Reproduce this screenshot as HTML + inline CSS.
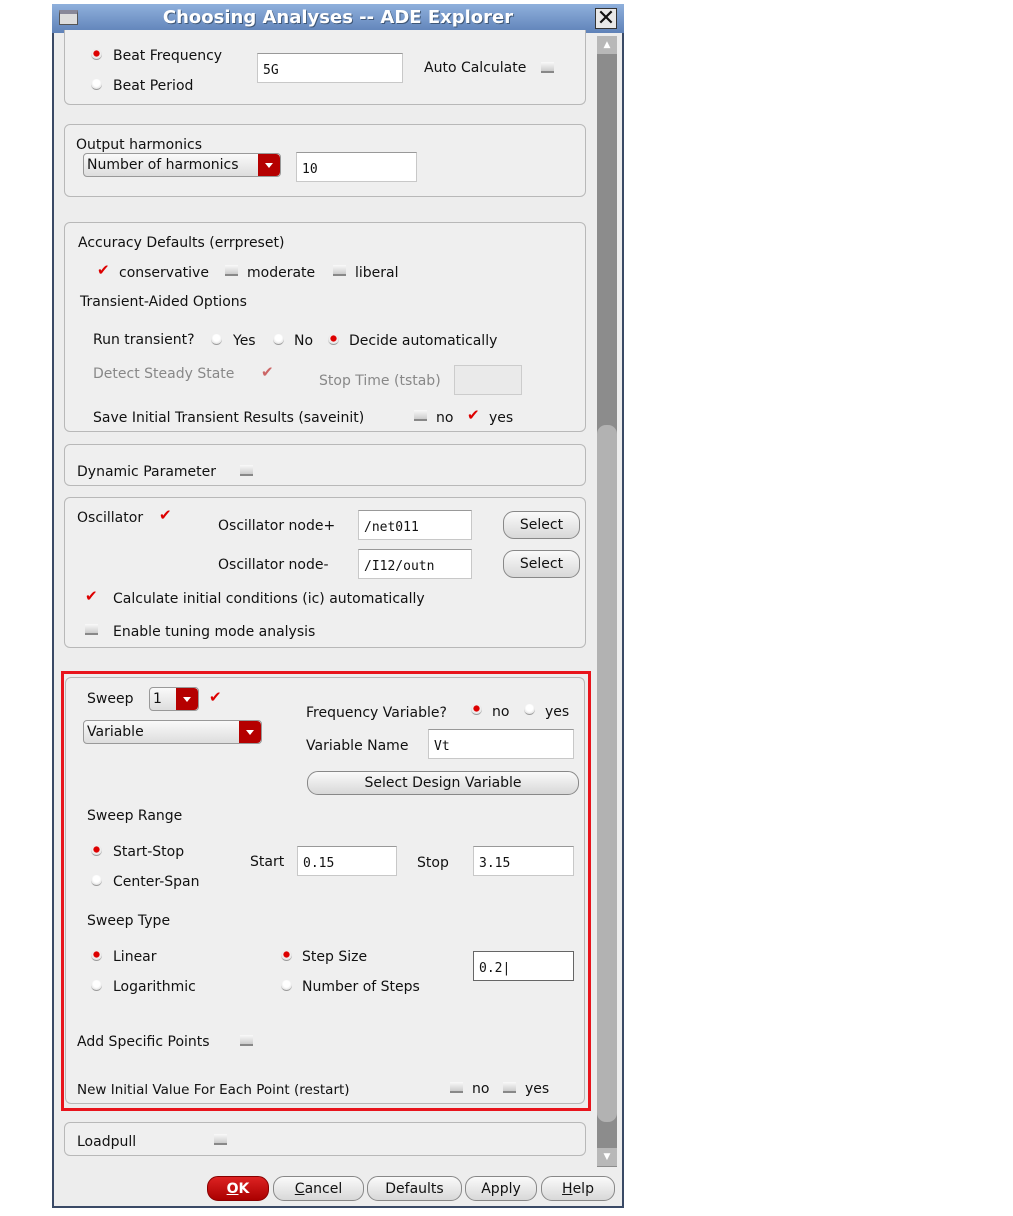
<!DOCTYPE html>
<html><head><meta charset="utf-8"><style>
*{box-sizing:border-box;margin:0;padding:0}
body{width:1013px;height:1216px;background:#fff;position:relative;font-family:"DejaVu Sans","Liberation Sans",sans-serif;font-size:14px;color:#111;overflow:hidden}
.a{position:absolute;white-space:nowrap;line-height:20px}
.win{position:absolute;left:52px;top:4px;width:572px;height:1204px;background:#ededed;border:2px solid #3a4a66}
.title{position:absolute;left:52px;top:4px;width:572px;height:29px;background:linear-gradient(#8fb0dc,#5f82b8);color:#fff;font-weight:bold;font-size:18px;text-align:center;line-height:28px;text-shadow:1px 1px 0 #405878}
.grp{position:absolute;border:1px solid #b8b8b8;border-radius:6px;background:#efefef}
.tf{position:absolute;background:#fff;border:1px solid #c8c8c8;border-top-color:#999;font-family:"DejaVu Sans Mono","Liberation Mono",monospace;font-size:13px;padding:9px 0 0 5px}
.rd{position:absolute;width:11px;height:11px;border-radius:50%;background:radial-gradient(circle at 50% 40%,#fff 40%,#ccc 100%);border-bottom:1px solid #999}
.rd.on{background:radial-gradient(circle at 50% 45%,#d00 35%,#f4f4f4 45%,#ccc 100%)}
.cb{position:absolute;width:13px;height:11px;background:linear-gradient(#fafafa,#ccc);border-bottom:2px solid #888}
.ck{position:absolute;color:#d00;font-size:15px;font-weight:bold;line-height:12px}
.btn{position:absolute;border:1px solid #888;border-radius:11px;background:linear-gradient(#fafafa,#d8d8d8);text-align:center;font-size:14px;line-height:26px}
.dd{position:absolute;border:1px solid #999;border-radius:4px;background:linear-gradient(#fafafa,#ddd);font-size:14px;padding-left:3px;line-height:23px}
.dd i{position:absolute;right:0;top:0;bottom:0;width:22px;background:#b50000;border-radius:0 4px 4px 0}
.dd i:after{content:"";position:absolute;left:7px;top:9px;border:4px solid transparent;border-top:5px solid #fff}
.g{color:#888}
</style></head><body>
<div class="win"></div>
<div class="title">Choosing Analyses -- ADE Explorer</div>
<div class="a" style="left:59px;top:10px;width:19px;height:15px;background:#ddd;border:1px solid #555;border-top:4px solid #889"></div>
<div class="a" style="left:595px;top:8px;width:22px;height:21px;background:#e8e8e8;border:1px solid #333;font-size:22px;line-height:19px;text-align:center;font-weight:bold">✕</div>
<!-- scrollbar -->
<div class="a" style="left:597px;top:36px;width:20px;height:1131px;background:#8c8c8c"></div>
<div class="a" style="left:597px;top:36px;width:20px;height:18px;background:#b8b8b8;color:#fff;font-size:9px;text-align:center;line-height:18px">▲</div>
<div class="a" style="left:597px;top:425px;width:20px;height:697px;background:#b2b2b2;border-radius:9px"></div>
<div class="a" style="left:597px;top:1148px;width:20px;height:18px;background:#b8b8b8;color:#fff;font-size:9px;text-align:center;line-height:18px">▼</div>

<div class="grp" style="left:64px;top:30px;width:522px;height:75px;border-top:none;border-radius:0 0 6px 6px"></div>
<div class="rd on" style="left:91px;top:49px"></div><div class="a" style="left:113px;top:46px">Beat Frequency</div>
<div class="rd" style="left:91px;top:79px"></div><div class="a" style="left:113px;top:76px">Beat Period</div>
<div class="tf" style="left:257px;top:53px;width:146px;height:30px">5G</div>
<div class="a" style="left:424px;top:58px">Auto Calculate</div><div class="cb" style="left:541px;top:62px"></div>

<div class="grp" style="left:64px;top:124px;width:522px;height:73px"></div>
<div class="a" style="left:76px;top:135px">Output harmonics</div>
<div class="dd" style="left:83px;top:153px;width:198px;height:24px">Number of harmonics<i></i></div>
<div class="tf" style="left:296px;top:152px;width:121px;height:30px">10</div>

<div class="grp" style="left:64px;top:222px;width:522px;height:210px"></div>
<div class="a" style="left:78px;top:233px">Accuracy Defaults (errpreset)</div>
<div class="ck" style="left:97px;top:264px">✔</div><div class="a" style="left:119px;top:263px">conservative</div>
<div class="cb" style="left:225px;top:265px"></div><div class="a" style="left:247px;top:263px">moderate</div>
<div class="cb" style="left:333px;top:265px"></div><div class="a" style="left:355px;top:263px">liberal</div>
<div class="a" style="left:80px;top:292px">Transient-Aided Options</div>
<div class="a" style="left:93px;top:330px">Run transient?</div>
<div class="rd" style="left:211px;top:334px"></div><div class="a" style="left:233px;top:331px">Yes</div>
<div class="rd" style="left:273px;top:334px"></div><div class="a" style="left:294px;top:331px">No</div>
<div class="rd on" style="left:328px;top:334px"></div><div class="a" style="left:349px;top:331px">Decide automatically</div>
<div class="a g" style="left:93px;top:364px">Detect Steady State</div><div class="ck" style="left:261px;top:366px;color:#c66">✔</div>
<div class="a g" style="left:319px;top:371px">Stop Time (tstab)</div>
<div class="a" style="left:454px;top:365px;width:68px;height:30px;border:1px solid #ccc;background:#eaeaea"></div>
<div class="a" style="left:93px;top:408px">Save Initial Transient Results (saveinit)</div>
<div class="cb" style="left:414px;top:410px"></div><div class="a" style="left:436px;top:408px">no</div>
<div class="ck" style="left:467px;top:409px">✔</div><div class="a" style="left:489px;top:408px">yes</div>

<div class="grp" style="left:64px;top:444px;width:522px;height:42px"></div>
<div class="a" style="left:77px;top:462px">Dynamic Parameter</div><div class="cb" style="left:240px;top:465px"></div>

<div class="grp" style="left:64px;top:497px;width:522px;height:151px"></div>
<div class="a" style="left:77px;top:508px">Oscillator</div><div class="ck" style="left:159px;top:509px">✔</div>
<div class="a" style="left:218px;top:516px">Oscillator node+</div>
<div class="tf" style="left:358px;top:510px;width:114px;height:30px">/net011</div>
<div class="btn" style="left:503px;top:511px;width:77px;height:28px">Select</div>
<div class="a" style="left:218px;top:555px">Oscillator node-</div>
<div class="tf" style="left:358px;top:549px;width:114px;height:30px">/I12/outn</div>
<div class="btn" style="left:503px;top:550px;width:77px;height:28px">Select</div>
<div class="ck" style="left:85px;top:590px">✔</div><div class="a" style="left:113px;top:589px">Calculate initial conditions (ic) automatically</div>
<div class="cb" style="left:85px;top:624px"></div><div class="a" style="left:113px;top:622px">Enable tuning mode analysis</div>

<div class="a" style="left:61px;top:671px;width:530px;height:440px;border:3px solid #e8141c"></div>
<div class="grp" style="left:65px;top:677px;width:520px;height:427px"></div>
<div class="a" style="left:87px;top:689px">Sweep</div>
<div class="dd" style="left:149px;top:687px;width:50px;height:24px">1<i></i></div>
<div class="ck" style="left:209px;top:691px">✔</div>
<div class="dd" style="left:83px;top:720px;width:179px;height:24px">Variable<i></i></div>
<div class="a" style="left:306px;top:703px">Frequency Variable?</div>
<div class="rd on" style="left:471px;top:704px"></div><div class="a" style="left:492px;top:702px">no</div>
<div class="rd" style="left:524px;top:704px"></div><div class="a" style="left:545px;top:702px">yes</div>
<div class="a" style="left:306px;top:736px">Variable Name</div>
<div class="tf" style="left:428px;top:729px;width:146px;height:30px">Vt</div>
<div class="btn" style="left:307px;top:771px;width:272px;height:24px;line-height:23px">Select Design Variable</div>
<div class="a" style="left:87px;top:806px">Sweep Range</div>
<div class="rd on" style="left:91px;top:845px"></div><div class="a" style="left:113px;top:842px">Start-Stop</div>
<div class="rd" style="left:91px;top:875px"></div><div class="a" style="left:113px;top:872px">Center-Span</div>
<div class="a" style="left:250px;top:852px">Start</div>
<div class="tf" style="left:297px;top:846px;width:100px;height:30px">0.15</div>
<div class="a" style="left:417px;top:853px">Stop</div>
<div class="tf" style="left:473px;top:846px;width:101px;height:30px">3.15</div>
<div class="a" style="left:87px;top:911px">Sweep Type</div>
<div class="rd on" style="left:91px;top:950px"></div><div class="a" style="left:113px;top:947px">Linear</div>
<div class="rd" style="left:91px;top:980px"></div><div class="a" style="left:113px;top:977px">Logarithmic</div>
<div class="rd on" style="left:281px;top:950px"></div><div class="a" style="left:302px;top:947px">Step Size</div>
<div class="rd" style="left:281px;top:980px"></div><div class="a" style="left:302px;top:977px">Number of Steps</div>
<div class="tf" style="left:473px;top:951px;width:101px;height:30px;border:1px solid #666">0.2|</div>
<div class="a" style="left:77px;top:1032px">Add Specific Points</div><div class="cb" style="left:240px;top:1035px"></div>
<div class="a" style="left:77px;top:1080px;font-size:13.5px">New Initial Value For Each Point (restart)</div>
<div class="cb" style="left:450px;top:1082px"></div><div class="a" style="left:472px;top:1079px">no</div>
<div class="cb" style="left:503px;top:1082px"></div><div class="a" style="left:525px;top:1079px">yes</div>

<div class="grp" style="left:64px;top:1122px;width:522px;height:34px"></div>
<div class="a" style="left:77px;top:1132px">Loadpull</div><div class="cb" style="left:214px;top:1134px"></div>

<div class="btn" style="left:207px;top:1176px;width:62px;height:25px;line-height:24px;background:linear-gradient(#d22,#a00);color:#fff;font-weight:bold;border-color:#800"><u>O</u>K</div>
<div class="btn" style="left:273px;top:1176px;width:91px;height:25px;line-height:24px"><u>C</u>ancel</div>
<div class="btn" style="left:367px;top:1176px;width:95px;height:25px;line-height:24px">Defaults</div>
<div class="btn" style="left:465px;top:1176px;width:72px;height:25px;line-height:24px">Apply</div>
<div class="btn" style="left:541px;top:1176px;width:74px;height:25px;line-height:24px"><u>H</u>elp</div>
</body></html>
